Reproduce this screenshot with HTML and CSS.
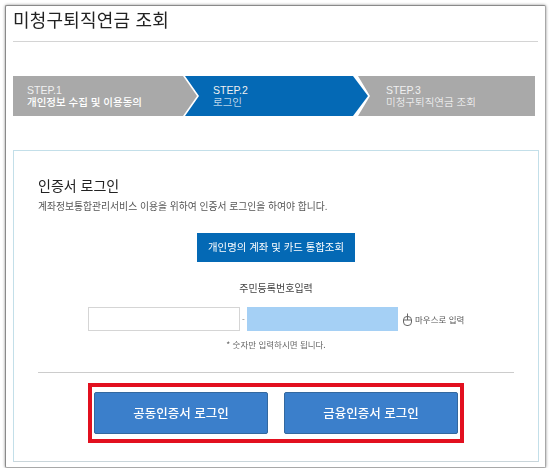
FILE: index.html
```html
<!DOCTYPE html>
<html lang="ko">
  <head>
    <meta charset="UTF-8" />
    <title>미청구퇴직연금 조회</title>
    <link rel="stylesheet" href="styles.css">
  </head>
  <body>
    <div class="window">
      <h1 class="page-title">미청구퇴직연금 조회</h1>

      <!-- steps -->
      <div class="steps">
        <div class="step step-first">
          <span>STEP.1</span>
          <strong>개인정보 수집 및 이용동의</strong>
        </div>
        <div class="step step-active">
          <span>STEP.2</span>
          <em>로그인</em>
        </div>
        <div class="step step-last">
          <span>STEP.3</span>
          <em>미청구퇴직연금 조회</em>
        </div>
      </div>

      <!-- login panel -->
      <div class="panel">
        <h2 class="panel-title">인증서 로그인</h2>
        <p class="panel-desc">계좌정보통합관리서비스 이용을 위하여 인증서 로그인을 하여야 합니다.</p>

        <div class="center">
          <a class="btn-search">개인명의 계좌 및 카드 통합조회</a>
        </div>

        <p class="id-label">주민등록번호입력</p>
        <div class="id-row">
          <input class="id-input" type="text" />
          <span class="id-dash">-</span>
          <input class="id-input id-input-secure" type="text" />
          <span class="mouse-input">
            <svg width="11" height="13" viewBox="0 0 11 13" fill="none" stroke="#666" stroke-width="1">
              <rect x="1.5" y="3.5" width="8" height="9" rx="3.5" />
              <path d="M1.5 7H9.5M5.5 0.5V7" />
            </svg>
            마우스로 입력
          </span>
        </div>
        <p class="id-note">* 숫자만 입력하시면 됩니다.</p>

        <hr class="divider" />

        <div class="cert-box">
          <a class="btn-cert">공동인증서 로그인</a>
          <a class="btn-cert">금융인증서 로그인</a>
        </div>
      </div>
    </div>
  </body>
</html>
```

FILE: styles.css
```css
body {
  margin: 0;
  background: #fff;
  font-family: "Noto Sans CJK KR", "Noto Sans", sans-serif;
  color: #333;
}

.window {
  box-sizing: border-box;
  width: 541px;
  height: 463px;
  margin: 5px 0 0 5px;
  padding: 0 7px;
  background: #fff;
  border-top: 1px solid #8a8a8a;
  border-left: 1px solid #8a8a8a;
  border-right: 1px solid #a8a8a8;
  border-bottom: 1px solid #a8a8a8;
  border-radius: 2px;
  box-shadow: 0 0 3px rgba(0, 0, 0, 0.45);
  filter: blur(0.3px);
}

.page-title {
  margin: 0;
  height: 35px;
  line-height: 27px;
  font-size: 18px;
  font-weight: 400;
  letter-spacing: 0.2px;
  color: #222;
  border-bottom: 1px solid #d4d4d4;
}

/* steps */
.steps {
  display: flex;
  width: 522px;
  margin-top: 34px;
}

.step {
  box-sizing: border-box;
  height: 40px;
  display: flex;
  flex-direction: column;
  justify-content: center;
  color: #fff;
  font-family: "Liberation Sans", "Noto Sans CJK KR", sans-serif;
  font-size: 10.5px;
  line-height: 12px;
  background: #a9a9a9;
}

.step span,
.step strong,
.step em {
  display: block;
  white-space: nowrap;
  font-style: normal;
}

.step span {
  color: #f0f0f0;
  font-weight: 400;
}

.step em {
  font-weight: 300;
}

.step strong {
  font-weight: 500;
}

.step-first {
  width: 184px;
  padding-left: 14px;
  clip-path: polygon(0 0, 170px 0, 100% 50%, 170px 100%, 0 100%);
}

.step-active {
  width: 183px;
  margin-left: -12px;
  padding-left: 28px;
  background: #0469b5;
  clip-path: polygon(0 0, 168px 0, 100% 50%, 168px 100%, 0 100%, 14px 50%);
}

.step-last {
  width: 177px;
  margin-left: -10px;
  padding-left: 28px;
  clip-path: polygon(0 0, 100% 0, 100% 100%, 0 100%, 12px 50%);
}

/* panel */
.panel {
  box-sizing: border-box;
  width: 526px;
  height: 312px;
  margin-top: 34px;
  padding: 24px 24px 0;
  border: 1px solid #c3dfe9;
  border-bottom-color: #c9d5da;
}

.panel-title {
  margin: 0;
  font-size: 14px;
  line-height: 20px;
  font-weight: 400;
  color: #222;
}

.panel-desc {
  margin: 4px 0 0;
  font-size: 9.8px;
  line-height: 14px;
  color: #555;
}

.center {
  display: flex;
  justify-content: center;
  margin-top: 20px;
}

.btn-search {
  width: 158px;
  height: 29px;
  line-height: 28px;
  text-align: center;
  font-size: 10.4px;
  color: #fff;
  background: #0469b5;
}

.id-label {
  margin: 18px 0 0;
  font-size: 10px;
  line-height: 16px;
  text-align: center;
  color: #444;
}

.id-row {
  display: flex;
  align-items: center;
  margin: 11px 0 0 50px;
}

.id-input {
  box-sizing: border-box;
  width: 152px;
  height: 24px;
  padding: 0;
  background: #fff;
  border: 1px solid #d5d5d5;
}

.id-dash {
  width: 7px;
  text-align: center;
  font-size: 8px;
  color: #777;
}

.id-input-secure {
  width: 151px;
  background: #a5d0f5;
  border: none;
}

.mouse-input {
  display: flex;
  align-items: center;
  gap: 2px;
  margin-left: 4px;
  font-size: 8.5px;
  color: #555;
  white-space: nowrap;
}

.id-note {
  margin: 6px 0 0;
  font-size: 8.5px;
  line-height: 14px;
  text-align: center;
  color: #666;
}

.divider {
  width: 476px;
  margin: 21px 0 0;
  border: 0;
  border-top: 1px solid #ccc;
}

.cert-box {
  box-sizing: border-box;
  display: flex;
  gap: 16px;
  width: 376px;
  height: 60px;
  margin: 10px 0 0 50px;
  padding: 5px 2px;
  background: #fff;
  border: 4px solid #e2101f;
}

.btn-cert {
  box-sizing: border-box;
  width: 174px;
  height: 42px;
  line-height: 39px;
  text-align: center;
  font-size: 12.5px;
  font-weight: 500;
  color: #fff;
  background: #3b7fcb;
  border: 1px solid #33689f;
  border-radius: 2px;
}
```
